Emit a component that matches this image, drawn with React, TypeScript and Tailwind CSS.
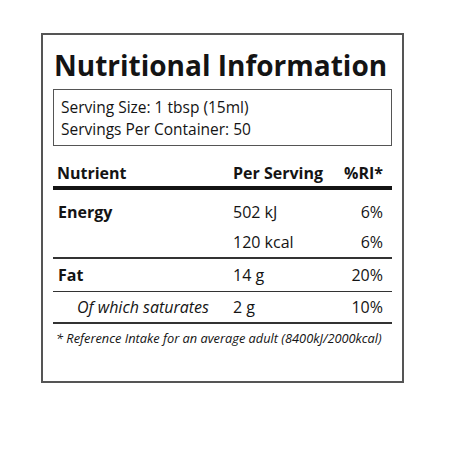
export default function App() {
  const font = { fontFamily: '"Open Sans", "Noto Sans", sans-serif' };
  return (
    <div className="w-[454px] h-[454px] bg-white text-[#141414]" style={font}>
      <div className="absolute left-[41px] top-[33px] w-[363px] h-[350px] border-2 border-[#555] px-[10px] pt-[10px]">
        <div className="text-[28px] font-bold leading-[36px] mt-[2px] pl-[1px]">Nutritional Information</div>
        <div className="mt-[6px] border-[1.5px] border-[#555] pl-[7px] pt-[6px] pb-[5px] text-[15.5px] leading-[22px]">
          <div>Serving Size: 1 tbsp (15ml)</div>
          <div>Servings Per Container: 50</div>
        </div>
        <div className="mt-[13px] grid grid-cols-[180px_1fr_auto] h-[27px] items-center text-[16px] font-bold">
          <div className="pl-[4px]">Nutrient</div>
          <div>Per Serving</div>
          <div className="pr-[9px] text-right">%RI*</div>
        </div>
        <div className="h-[4px] bg-[#141414]" />
        <div className="pt-[7px] text-[16px]">
          <div className="grid grid-cols-[180px_1fr_auto] h-[30px] items-center">
            <div className="pl-[5px] font-bold">Energy</div>
            <div>502 kJ</div>
            <div className="pr-[9px] text-right">6%</div>
          </div>
          <div className="grid grid-cols-[180px_1fr_auto] h-[30px] items-center">
            <div />
            <div>120 kcal</div>
            <div className="pr-[9px] text-right">6%</div>
          </div>
        </div>
        <div className="h-[1.5px] bg-[#333]" />
        <div className="grid grid-cols-[180px_1fr_auto] h-[32px] items-center text-[16px]">
          <div className="pl-[5px] font-bold">Fat</div>
          <div>14 g</div>
          <div className="pr-[9px] text-right">20%</div>
        </div>
        <div className="h-[1.5px] bg-[#333]" />
        <div className="grid grid-cols-[180px_1fr_auto] h-[30px] items-center text-[16px]">
          <div className="pl-[24px] italic">Of which saturates</div>
          <div>2 g</div>
          <div className="pr-[9px] text-right">10%</div>
        </div>
        <div className="h-[1.5px] bg-[#333]" />
        <div className="pt-[5px] pl-[3px] text-[12.8px] italic leading-[18px]">
          * Reference Intake for an average adult (8400kJ/2000kcal)
        </div>
      </div>
    </div>
  );
}
